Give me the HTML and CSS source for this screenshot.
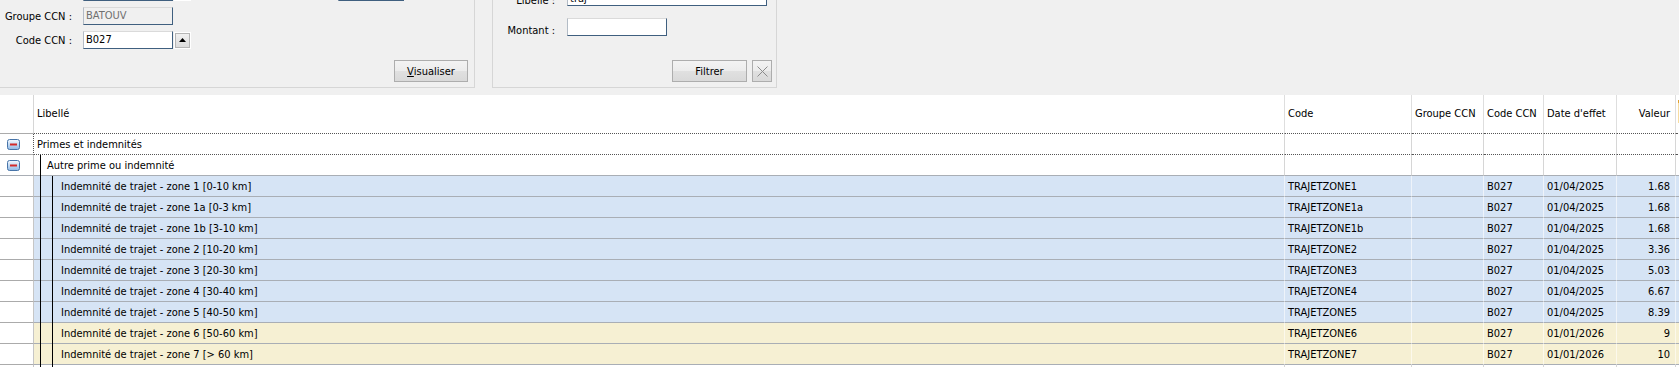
FILE: index.html
```html
<!DOCTYPE html>
<html lang="fr">
<head>
<meta charset="utf-8">
<title>Primes</title>
<link rel="stylesheet" href="styles.css">
</head>
<body>
<div class="top">
  <section class="panel p1">
    <div class="frow r0">
      <span class="lbl"></span>
      <span class="inp"></span>
      <span class="tbtn"></span>
      <span class="inp inp-far"></span>
    </div>
    <div class="frow">
      <span class="lbl">Groupe CCN :</span>
      <span class="inp dis">BATOUV</span>
    </div>
    <div class="frow">
      <span class="lbl">Code CCN :</span>
      <span class="inp">B027</span>
      <span class="tbtn"><svg width="7" height="4" viewBox="0 0 7 4"><path d="M0 4 L3.5 0 L7 4 Z" fill="#000"/></svg></span>
    </div>
    <div class="brow b1">
      <button class="btn vis"><u>V</u>isualiser</button>
    </div>
  </section>
  <section class="panel p2">
    <div class="frow q0">
      <span class="lbl">Libellé :</span>
      <span class="inp wide">traj</span>
    </div>
    <div class="frow">
      <span class="lbl">Montant :</span>
      <span class="inp mid"></span>
    </div>
    <div class="brow b2">
      <button class="btn fil">Filtrer</button>
      <button class="btn clr"><svg width="11" height="11" viewBox="0 0 11 11"><path d="M0.5 0.5 L10.5 10.5 M10.5 0.5 L0.5 10.5" stroke="#8c8c8c" stroke-width="1" fill="none"/></svg></button>
    </div>
  </section>
</div>

<div class="grid">
  <div class="row thead">
    <div class="c lead"></div>
    <div class="c lib"><span class="t0">Libellé</span></div>
    <div class="c">Code</div>
    <div class="c">Groupe CCN</div>
    <div class="c">Code CCN</div>
    <div class="c">Date d'effet</div>
    <div class="c num">Valeur</div>
    <div class="c end"><span class="mark"></span></div>
  </div>

  <div class="row focus">
    <div class="c lead"><svg class="minus" width="13" height="11" viewBox="0 0 13 11"><defs><linearGradient id="mg1" x1="0" y1="0" x2="0" y2="1"><stop offset="0" stop-color="#f6faff"/><stop offset="1" stop-color="#8fb9e6"/></linearGradient></defs><rect x="0.5" y="0.5" width="12" height="10" rx="2" fill="url(#mg1)" stroke="#4774a8"/><rect x="3" y="4.5" width="7" height="2" fill="#d42a2a"/></svg></div>
    <div class="c lib"><span class="t0">Primes et indemnités</span></div>
    <div class="c"></div><div class="c"></div><div class="c"></div><div class="c"></div><div class="c num"></div><div class="c end"></div>
  </div>

  <div class="row plain">
    <div class="c lead"><svg class="minus" width="13" height="11" viewBox="0 0 13 11"><defs><linearGradient id="mg2" x1="0" y1="0" x2="0" y2="1"><stop offset="0" stop-color="#f6faff"/><stop offset="1" stop-color="#8fb9e6"/></linearGradient></defs><rect x="0.5" y="0.5" width="12" height="10" rx="2" fill="url(#mg2)" stroke="#4774a8"/><rect x="3" y="4.5" width="7" height="2" fill="#d42a2a"/></svg></div>
    <div class="c lib"><i class="g"></i><span class="t1">Autre prime ou indemnité</span></div>
    <div class="c"></div><div class="c"></div><div class="c"></div><div class="c"></div><div class="c num"></div><div class="c end"></div>
  </div>

  <div class="row blue">
    <div class="c lead"></div>
    <div class="c lib"><i class="g"></i><i class="g"></i><span class="t2">Indemnité de trajet - zone 1 [0-10 km]</span></div>
    <div class="c">TRAJETZONE1</div><div class="c"></div><div class="c">B027</div><div class="c">01/04/2025</div><div class="c num">1.68</div><div class="c end"></div>
  </div>
  <div class="row blue">
    <div class="c lead"></div>
    <div class="c lib"><i class="g"></i><i class="g"></i><span class="t2">Indemnité de trajet - zone 1a [0-3 km]</span></div>
    <div class="c">TRAJETZONE1a</div><div class="c"></div><div class="c">B027</div><div class="c">01/04/2025</div><div class="c num">1.68</div><div class="c end"></div>
  </div>
  <div class="row blue">
    <div class="c lead"></div>
    <div class="c lib"><i class="g"></i><i class="g"></i><span class="t2">Indemnité de trajet - zone 1b [3-10 km]</span></div>
    <div class="c">TRAJETZONE1b</div><div class="c"></div><div class="c">B027</div><div class="c">01/04/2025</div><div class="c num">1.68</div><div class="c end"></div>
  </div>
  <div class="row blue">
    <div class="c lead"></div>
    <div class="c lib"><i class="g"></i><i class="g"></i><span class="t2">Indemnité de trajet - zone 2 [10-20 km]</span></div>
    <div class="c">TRAJETZONE2</div><div class="c"></div><div class="c">B027</div><div class="c">01/04/2025</div><div class="c num">3.36</div><div class="c end"></div>
  </div>
  <div class="row blue">
    <div class="c lead"></div>
    <div class="c lib"><i class="g"></i><i class="g"></i><span class="t2">Indemnité de trajet - zone 3 [20-30 km]</span></div>
    <div class="c">TRAJETZONE3</div><div class="c"></div><div class="c">B027</div><div class="c">01/04/2025</div><div class="c num">5.03</div><div class="c end"></div>
  </div>
  <div class="row blue">
    <div class="c lead"></div>
    <div class="c lib"><i class="g"></i><i class="g"></i><span class="t2">Indemnité de trajet - zone 4 [30-40 km]</span></div>
    <div class="c">TRAJETZONE4</div><div class="c"></div><div class="c">B027</div><div class="c">01/04/2025</div><div class="c num">6.67</div><div class="c end"></div>
  </div>
  <div class="row blue">
    <div class="c lead"></div>
    <div class="c lib"><i class="g"></i><i class="g"></i><span class="t2">Indemnité de trajet - zone 5 [40-50 km]</span></div>
    <div class="c">TRAJETZONE5</div><div class="c"></div><div class="c">B027</div><div class="c">01/04/2025</div><div class="c num">8.39</div><div class="c end"></div>
  </div>
  <div class="row yellow">
    <div class="c lead"></div>
    <div class="c lib"><i class="g"></i><i class="g"></i><span class="t2">Indemnité de trajet - zone 6 [50-60 km]</span></div>
    <div class="c">TRAJETZONE6</div><div class="c"></div><div class="c">B027</div><div class="c">01/01/2026</div><div class="c num">9</div><div class="c end"></div>
  </div>
  <div class="row yellow">
    <div class="c lead"></div>
    <div class="c lib"><i class="g"></i><i class="g"></i><span class="t2">Indemnité de trajet - zone 7 [&gt; 60 km]</span></div>
    <div class="c">TRAJETZONE7</div><div class="c"></div><div class="c">B027</div><div class="c">01/01/2026</div><div class="c num">10</div><div class="c end"></div>
  </div>
  <div class="row plain tail">
    <div class="c lead"></div>
    <div class="c lib"><i class="g"></i><i class="g"></i></div>
    <div class="c"></div><div class="c"></div><div class="c"></div><div class="c"></div><div class="c num"></div><div class="c end"></div>
  </div>
</div>
</body>
</html>
```

FILE: styles.css
```css
* { box-sizing: border-box; }
html, body { margin: 0; padding: 0; }
body {
  width: 1679px;
  height: 367px;
  overflow: hidden;
  background: #f0f0f0;
  font-family: "DejaVu Sans Condensed", "DejaVu Sans", sans-serif;
  font-stretch: condensed;
  font-size: 11px;
  color: #000;
}

/* ---------- top filter panels ---------- */
.top {
  height: 95px;
  display: flex;
  align-items: flex-start;
}
.panel {
  margin-top: -30px;
  height: 118px;
  border: 1px solid #d6d6d6;
  display: flex;
  flex-direction: column;
  flex: none;
}
.p1 { margin-left: -1px; width: 476px; padding: 12px 6px 0 0; }
.p2 { margin-left: 17px; width: 285px; padding: 17px 4px 0 0; }

.frow {
  display: flex;
  align-items: center;
  height: 18px;
  margin-bottom: 6px;
  flex: none;
}
.lbl {
  flex: none;
  width: 72px;
  margin-right: 11px;
  text-align: right;
  white-space: nowrap;
}
.p2 .lbl { width: 62px; margin-right: 12px; padding-top: 6px; }
.p2 .q0 { margin-bottom: 12px; }

.inp {
  flex: none;
  height: 18px;
  width: 90px;
  background: #fff;
  border: 1px solid;
  border-color: #dadada #3f5f7f #3f5f7f #b3bcc6;
  padding: 0 2px;
  line-height: 16px;
  white-space: nowrap;
  overflow: hidden;
}
.inp.dis { background: #f0f0f0; color: #6f6f6f; }
.inp.inp-far { margin-left: 147px; width: 66px; }
.inp.wide { width: 200px; line-height: 20px; }
.inp.mid { width: 100px; }

.tbtn {
  flex: none;
  width: 17px;
  height: 17px;
  margin-left: 1px;
  border: 1px solid #fff;
  outline: 1px solid #b5b5b5;
  outline-offset: -2px;
  background: linear-gradient(#f2f2f2, #dadada);
  display: flex;
  align-items: center;
  justify-content: center;
}

.brow {
  display: flex;
  justify-content: flex-end;
  flex: none;
}
.b1 { margin-top: 5px; }
.b2 { margin-top: 18px; gap: 5px; }

.btn {
  height: 22px;
  padding: 0;
  border: 1px solid #adadad;
  background: linear-gradient(#f3f3f3 0%, #ececec 50%, #e0e0e0 51%, #d9d9d9 100%);
  font: inherit;
  color: #000;
  display: flex;
  align-items: center;
  justify-content: center;
}
.btn.vis { width: 74px; }
.btn.fil { width: 75px; }
.btn.clr { width: 20px; }

/* ---------- grid ---------- */
.grid { background: #fff; }
.row {
  display: grid;
  grid-template-columns: 34px 1251px 127px 72px 60px 73px 59px 1fr;
  grid-template-rows: 21px;
  height: 21px;
}
.row.tail { height: 3px; grid-template-rows: 3px; }
.c {
  height: 100%;
  border-right: 1px solid #d6d6d6;
  border-bottom: 1px solid #a9aeb5;
  padding: 1px 3px 0;
  line-height: 19px;
  white-space: nowrap;
  overflow: hidden;
}
.c.num { text-align: right; padding-right: 5px; }
.c.end { border-right: none; }
.c.lead {
  background: #fff;
  border-right-color: #c6c6c6;
  border-bottom-color: #ababab;
  padding: 0 0 0 7px;
  display: flex;
  align-items: center;
}
.c.lib {
  display: flex;
  align-items: stretch;
  padding: 0 0 0 6px;
  overflow: visible;
}
.c.lib span { padding-top: 1px; line-height: 19px; }
.g {
  flex: none;
  width: 1px;
  background: #000;
  margin-bottom: -1px;
}
.g + .g { margin-left: 11px; }
.t0 { margin-left: -3px; }
.t1 { margin-left: 6px; }
.t2 { margin-left: 8px; }

.thead { height: 39px; grid-template-rows: 39px; }
.thead .c { padding-top: 0; line-height: 38px; border-right-color: #dedede; border-bottom: 1px dotted #555; }
.thead .c.lib span { padding-top: 0; line-height: 38px; }
.thead .c.lead { border-bottom: 1px solid #ababab; border-right-color: #d6d6d6; }
.mark {
  display: block;
  width: 3px;
  height: 23px;
  margin: 5px 0 0 -1px;
  background: linear-gradient(#e0a030 0, #e0a030 3px, #f7dca0 3px);
}

.focus .c { border-bottom: 1px dotted #555; }
.focus .c.lead { border-right: 1px dotted #555; border-bottom: 1px solid #ababab; }
.plain .c { border-bottom-color: #a9aeb5; }
.tail .c { border-bottom: none; }

.blue .c { background: #d6e4f5; border-right-color: #eef3fa; }
.yellow .c { background: #f6f0d3; border-right-color: #fcf9ec; }
.blue .c.lead, .yellow .c.lead { background: #fff; border-right-color: #c6c6c6; }
```
